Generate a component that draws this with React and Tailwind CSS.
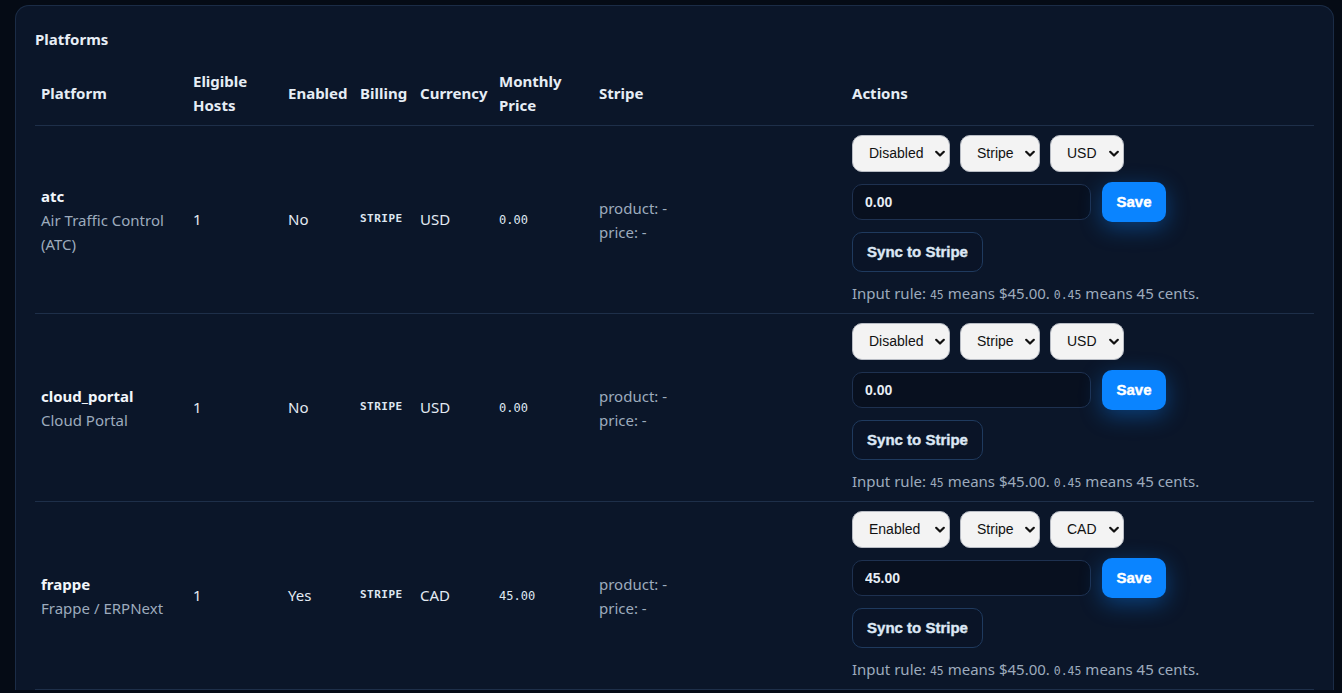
import React from "react";

const rows = [
  { key: "atc", name: "Air Traffic Control (ATC)", hosts: "1", enabled: "No", currency: "USD", price: "0.00", sel: "Disabled" },
  { key: "cloud_portal", name: "Cloud Portal", hosts: "1", enabled: "No", currency: "USD", price: "0.00", sel: "Disabled" },
  { key: "frappe", name: "Frappe / ERPNext", hosts: "1", enabled: "Yes", currency: "CAD", price: "45.00", sel: "Enabled" },
];

const sans = "font-['Noto_Sans','Open_Sans',sans-serif]";
const mono = "font-['DejaVu_Sans_Mono',monospace]";
const arial = "font-['Liberation_Sans',Arial,sans-serif]";

function Chevron() {
  return (
    <svg className="pointer-events-none absolute right-[5px] top-1/2 -translate-y-1/2" width="10" height="7" viewBox="0 0 10 7">
      <path d="M1.2 1.2 L5 5 L8.8 1.2" fill="none" stroke="#111" strokeWidth="2.2" strokeLinecap="round" strokeLinejoin="round" />
    </svg>
  );
}

function Select({ value, options, w }) {
  return (
    <div className={`relative h-[37px] ${w}`}>
      <select
        defaultValue={value}
        className={`${arial} block h-[37px] w-full appearance-none rounded-[10px] border border-[#b8bcc4] bg-[#f3f3f3] pl-[16px] pr-[20px] text-[14px] text-[#111]`}
      >
        {options.map((o) => (
          <option key={o}>{o}</option>
        ))}
      </select>
      <Chevron />
    </div>
  );
}

export default function App() {
  return (
    <div className="min-h-[693px] bg-[#050b15] pl-[15px] pr-[8px] pt-[5px]">
      <div className={`${sans} rounded-t-[14px] border border-b-0 border-[#1b2c46] bg-[#0b1629] px-[19px] pt-[22px]`}>
        <h2 className="mb-[11px] text-[15px] font-bold leading-[22px] text-[#e8eef6]">Platforms</h2>
        <table className="w-full table-fixed border-collapse text-[15px]">
          <colgroup>
            <col className="w-[152px]" />
            <col className="w-[95px]" />
            <col className="w-[72px]" />
            <col className="w-[60px]" />
            <col className="w-[79px]" />
            <col className="w-[100px]" />
            <col className="w-[253px]" />
            <col />
          </colgroup>
          <thead>
            <tr className="border-b border-[#1e2f49] text-left text-[#e6edf5]">
              {["Platform", "Eligible Hosts", "Enabled", "Billing", "Currency", "Monthly Price", "Stripe", "Actions"].map((h) => (
                <th key={h} className="px-[6px] py-[8px] align-middle font-bold leading-[24px]">
                  {h}
                </th>
              ))}
            </tr>
          </thead>
          <tbody>
            {rows.map((r) => (
              <tr key={r.key} className="border-b border-[#1e2f49] text-[#e3eaf3]">
                <td className="px-[6px] align-middle leading-[24px]">
                  <div className="font-bold text-[#f2f6fb]">{r.key}</div>
                  <div className="text-[#9dabbd]">{r.name}</div>
                </td>
                <td className="px-[6px] align-middle">{r.hosts}</td>
                <td className="px-[6px] align-middle">{r.enabled}</td>
                <td className={`px-[6px] align-middle ${mono} text-[11px] font-semibold tracking-[0.5px] text-[#dfe7f1]`}>STRIPE</td>
                <td className="px-[6px] align-middle">{r.currency}</td>
                <td className={`px-[6px] align-middle ${mono} text-[12px] text-[#dfe7f1]`}>{r.price}</td>
                <td className="px-[6px] align-middle leading-[24px] text-[#9dabbd]">
                  <div>product: -</div>
                  <div>price: -</div>
                </td>
                <td className="px-[6px] pb-[7px] pt-[9px] align-top">
                  <div className="flex flex-col items-start gap-[10px]">
                    <div className="flex gap-[10px]">
                      <Select value={r.sel} options={["Disabled", "Enabled"]} w="w-[98px]" />
                      <Select value="Stripe" options={["Stripe"]} w="w-[80px]" />
                      <Select value={r.currency} options={["USD", "CAD"]} w="w-[74px]" />
                    </div>
                    <div className="flex h-[40px] items-center gap-[11px]">
                      <input
                        defaultValue={r.price}
                        className={`${arial} block h-[36px] w-[239px] rounded-[10px] border border-[#1e3150] bg-[#08101f] px-[12px] text-[14px] font-bold text-[#e6edf5] outline-none`}
                      />
                      <button className={`${arial} block h-[40px] w-[64px] rounded-[10px] bg-[#0a84ff] text-[15px] font-bold text-white shadow-[0_6px_22px_rgba(10,132,255,0.38)] [-webkit-text-stroke:0.4px_white]`}>
                        Save
                      </button>
                    </div>
                    <button className={`${arial} block h-[40px] w-[131px] rounded-[10px] border border-[#1f3a5e] bg-[#0a1427] text-[15px] font-bold text-[#dce7f4] [-webkit-text-stroke:0.4px_#dce7f4]`}>
                      Sync to Stripe
                    </button>
                    <div className="text-[15px] leading-[22px] text-[#9dabbd]">
                      Input rule: <span className={`${mono} text-[11.5px]`}>45</span> means $45.00. <span className={`${mono} text-[11.5px]`}>0.45</span> means 45 cents.
                    </div>
                  </div>
                </td>
              </tr>
            ))}
          </tbody>
        </table>
      </div>
    </div>
  );
}
